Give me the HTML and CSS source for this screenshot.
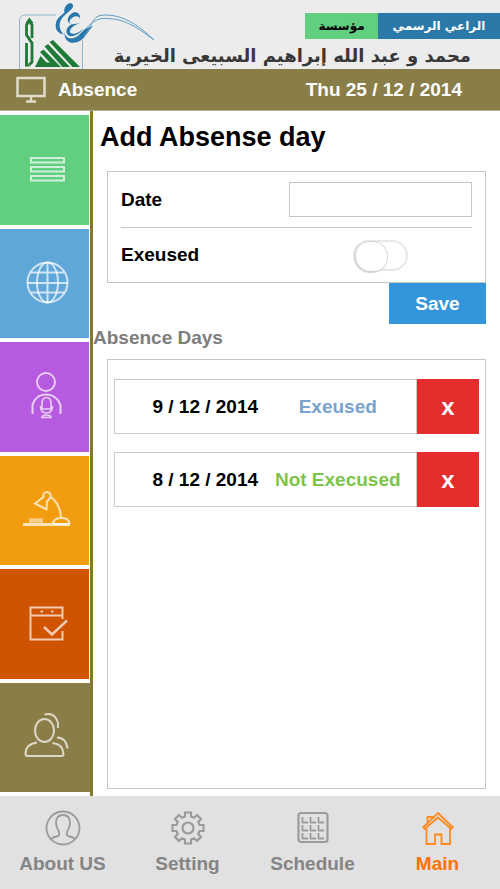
FILE: index.html
```html
<!DOCTYPE html>
<html lang="en">
<head>
<meta charset="utf-8">
<meta name="viewport" content="width=device-width, initial-scale=1">
<title>Absence</title>
<link rel="stylesheet" href="styles.css">
</head>
<body>
<div class="app">
  <header class="brand">
    <svg class="brand-logo" viewBox="0 0 156 69" aria-hidden="true">
      <path d="M19.500 69V21q0-6 6-6H56M82.500 69V40" fill="none" stroke="#8fb6d0"/>
      <g fill="none" stroke="#1f7a38" stroke-width="2.800">
        <path d="M32 38V25l-2.700-4.500L26.500 25v10l5.500 8v19l-3 3M26.500 43v23"/>
      </g>
      <g fill="#1f7a38">
        <path d="M25 66.500V60l5 6.500zM25.500 23l3.800-5.500L33.500 23z"/>
        <path d="M35 67l5.500-11 6 6.500H54l4.500 4.500z"/>
        <path d="M40 52l3.500-2.500L61 67h-7zM44.500 46.500l3.500-2.500 22 23h-7.500zM49.500 42l3.500-2 27 27h-7.500z"/>
      </g>
      <g fill="#2878ab">
        <path d="M69 3.500c3-.8 5 1.500 3.700 4C71 11 63 15 60.500 21c-2 5-.5 9 3 13.500-6-1-9-6-7.500-12 1.500-5 5-7 8.500-10-1-3 1-8 4.500-9z"/>
        <path d="M80 19c0-3-5-4-8-1-4 3-3 7 3 6l5-1c-5 2-9 4-10 8-.5 3 4 4 9 1l4-3c-4 6-12 9-15 6-4-4 0-9 4-11-6-1-5-7-1-10 4-4 10-1 9 5z"/>
        <path d="M64.500 32c1 7 8 8.500 14.500 3 4-4 7-7.500 14-9-4 4-6 9-11 13.500-8 6-18 4-17.500-7.500z"/>
      </g>
      <g fill="none" stroke="#5f9dc4">
        <path d="M84 36C91 30 91 18 100 15.500c20-3 38 9 54 24.500"/>
        <path d="M83 31c6-5 10-11 19-12.500 20-1 33 7 52 21.500"/>
      </g>
    </svg>
    <div class="brand-text" lang="ar" dir="rtl">
      <div class="brand-tags">
        <span class="tag tag-sponsor">الراعي الرسمي</span>
        <span class="tag tag-org">مؤسسة</span>
      </div>
      <p class="brand-name">محمد و عبد الله إبراهيم السبيعى الخيرية</p>
    </div>
  </header>

  <div class="titlebar">
    <svg class="title-icon" viewBox="0 0 30 28" aria-hidden="true"><path d="M1.500 2h27v18h-27zM15 20v5M10 25.500h10" fill="none" stroke="#dfdcc9" stroke-width="2.500"/></svg>
    <span class="title">Absence</span>
    <time class="today" datetime="2014-12-25">Thu 25 / 12 / 2014</time>
  </div>

  <div class="body">
    <nav class="side" aria-label="Sections">
      <a href="#" class="tile tile-green" aria-label="List"><svg viewBox="0 0 48 48"><path d="M8 12h33v4.500H8zM8 21h33v4.500H8zM8 30h33v4.500H8z"/></svg></a>
      <a href="#" class="tile tile-blue" aria-label="World"><svg viewBox="0 0 48 48"><circle cx="24.500" cy="23.500" r="20"/><ellipse cx="24.500" cy="23.500" rx="10.500" ry="20"/><path d="M24.500 3.500v40M4.500 24h40M8 13.500h33M8 33.500h33"/></svg></a>
      <a href="#" class="tile tile-purple" aria-label="Speaker"><svg viewBox="0 0 48 48"><circle cx="23" cy="9" r="9"/><path d="M9.500 41V32q3-10.500 13.500-10.500T37.500 32v9"/><path d="M19 36v-5.500q0-6 4.500-6t4.500 6V36M17.500 33q0 7 6 7t6-7M17.500 36h12M19 44.500q0-2.500 4.500-2.500t4.500 2.500z" stroke-width="1.600"/></svg></a>
      <a href="#" class="tile tile-orange" aria-label="Study"><svg viewBox="0 0 48 48"><path d="M12 17.500l8.500-6.500q-1-4.500 3.500-5 4.500.5 3.500 5.500l-3.500 4-.5 8zM28 11q9 7 10 20.500M30 37q1-5 8.500-5 7 0 8 5-8 3-16.500 0z"/><path d="M0 38.500h47" stroke-width="2.800"/><path d="M6 34.500h14" stroke-width="4.500" opacity=".7"/></svg></a>
      <a href="#" class="tile tile-rust" aria-label="Tasks"><svg viewBox="0 0 48 48"><path d="M39.500 19V7.500H7.500v32h32V31M7.500 15.500h32"/><path d="M17.500 11.500h2.500M28 11.500h2.500" stroke-width="2"/><path d="M21 27l8 7.500 15-14" stroke-width="2.400"/></svg></a>
      <a href="#" class="tile tile-olive" aria-label="People"><svg viewBox="0 0 48 48"><ellipse cx="21.500" cy="17.500" rx="9.500" ry="11.500"/><path d="M14 29.500Q2.500 31 2.500 41q0 2 2 2h34q2 0 2-2Q40 31 29.500 30M21.500 1.500Q32-1 35 10v5M34 24.500q9 0 10.500 11"/></svg></a>
    </nav>

    <main class="content">
      <h1 class="heading">Add Absense day</h1>
      <form class="entry">
        <div class="fields">
          <div class="field">
            <label for="date">Date</label>
            <div class="control"><input class="date-input" id="date" type="text"></div>
          </div>
          <div class="field">
            <label for="excused">Exeused</label>
            <div class="control"><input class="switch" id="excused" type="checkbox" role="switch"></div>
          </div>
        </div>
        <button class="save" type="submit">Save</button>
      </form>

      <h2 class="subheading">Absence Days</h2>
      <ul class="days">
        <li class="day">
          <div class="day-info"><span>9 / 12 / 2014</span><span class="excused">Exeused</span></div>
          <button class="remove" type="button">x</button>
        </li>
        <li class="day">
          <div class="day-info"><span>8 / 12 / 2014</span><span class="unexcused">Not Execused</span></div>
          <button class="remove" type="button">x</button>
        </li>
      </ul>
    </main>
  </div>

  <nav class="tabs" aria-label="Main">
    <a href="#" class="tab">
      <svg viewBox="0 0 36 36"><circle cx="18" cy="18" r="16.500"/><path d="M6 29q2-2 7-3 2-1 1-4-3-5-3-9 0-8 7-8t7 8q0 4-3 9-1 3 1 4 5 1 7 3"/></svg>
      About US
    </a>
    <a href="#" class="tab">
      <svg viewBox="0 0 36 36"><g stroke-width="2.200"><path d="M15 2.500h6v4l3 1.300 3-2.800 4 4-2.800 3 1.300 3h4v6h-4l-1.300 3 2.800 3-4 4-3-2.800-3 1.300v4h-6v-4l-3-1.300L9 31l-4-4 2.800-3-1.300-3h-4v-6h4l1.300-3L5 9l4-4 3 2.800 3-1.300z"/><circle cx="18" cy="18" r="5.500"/></g></svg>
      Setting
    </a>
    <a href="#" class="tab">
      <svg viewBox="0 0 36 36"><rect x="3.500" y="3" width="29" height="29" rx="2.500" stroke-width="2.200"/><path d="M7.500 7v5.500H13M15.500 7v5.500H21M23.500 7v5.500H29M7.500 15v5.500H13M15.500 15v5.500H21M23.500 15v5.500H29M7.500 23v5.500H13M15.500 23v5.500H21M23.500 23v5.500H29"/></svg>
      Schedule
    </a>
    <a href="#" class="tab tab-active" aria-current="page">
      <svg viewBox="0 0 36 36"><path d="M2.500 18L18 3l15.500 15M4 19.500L18 7.500l14 12M6.500 18.500V34H15V24.500h6.500V34H30V18.500M7.500 12.500V7H12v2"/></svg>
      Main
    </a>
  </nav>
</div>
</body>
</html>
```
FILE: styles.css
```css
* {
  box-sizing: border-box;
}

body {
  margin: 0;
  background: #fff;
  color: #000;
  font: bold 19px/24px "Liberation Sans", Arial, sans-serif;
}

button,
input {
  font: inherit;
}

a {
  color: inherit;
  text-decoration: none;
}

.app {
  display: flex;
  flex-direction: column;
  min-height: 100vh;
}

.brand {
  display: grid;
  background: #ececec;
}

.brand > * {
  grid-area: 1 / 1;
}

.brand-logo {
  width: 156px;
  height: 69px;
}

.brand-text {
  padding-top: 13px;
  font-family: "DejaVu Sans", sans-serif;
}

.brand-tags {
  display: flex;
  font-size: 12px;
  line-height: 26px;
  text-align: center;
}

.tag-sponsor {
  width: 122px;
  background: #2a79a9;
  color: #fff;
}

.tag-org {
  width: 73px;
  background: #62cf80;
}

.brand-name {
  margin: 0;
  padding: 4px 29px 0 0;
  color: #383838;
  font-size: 18px;
  line-height: 26px;
  white-space: nowrap;
}

.titlebar {
  display: flex;
  align-items: center;
  height: 42px;
  padding: 0 38px 0 16px;
  border-bottom: 1px solid #b7af8e;
  background: #8a7e48;
  color: #fff;
}

.title-icon {
  width: 30px;
  height: 28px;
  margin-right: 12px;
}

.today {
  margin-left: auto;
}

.body {
  display: flex;
  flex: 1;
}

.side {
  display: flex;
  flex-direction: column;
  gap: 4px;
  width: 93px;
  padding: 4px 0;
  border-right: 3px solid #85782a;
}

.tile {
  display: grid;
  flex: 1;
  place-items: center;
  min-height: 64px;
  margin-right: 1px;
}

.tile svg {
  width: 48px;
  height: 48px;
  margin-left: 4px;
  overflow: visible;
  fill: none;
  stroke: rgba(255, 255, 255, 0.7);
  stroke-width: 2;
}

.tile-green { background: #62cf80; }
.tile-blue { background: #5fa6d9; }
.tile-purple { background: #b65be0; }
.tile-orange { background: #f29d10; }
.tile-rust { background: #d05300; }
.tile-olive { margin-right: 0; background: #8a7e48; }

.content {
  display: flex;
  flex: 1;
  flex-direction: column;
  padding: 8px 14px 7px;
}

.heading {
  margin: 0 -7px 16px;
  font-size: 27px;
  line-height: 36px;
}

.entry {
  display: flex;
  flex-direction: column;
}

.fields {
  padding: 0 13px;
  border: 1px solid #c6c6c6;
}

.field {
  display: flex;
  align-items: center;
  height: 55px;
}

.field + .field {
  border-top: 1px solid #c6c6c6;
}

.field label {
  flex: 1;
}

.control {
  display: flex;
  justify-content: center;
  width: 52%;
}

.date-input {
  width: 100%;
  height: 35px;
  padding: 0 8px;
  border: 1px solid #c6c6c6;
  border-radius: 0;
  background: #fff;
}

.switch {
  width: 55px;
  height: 31px;
  margin: 0;
  border: 2px solid #e8e8e8;
  border-radius: 16px;
  appearance: none;
  background: #fff;
}

.switch::before {
  display: block;
  width: 32px;
  height: 30px;
  margin: -1px;
  border: 1px solid #d4d4d4;
  border-radius: 15px;
  background: #fff;
  box-shadow: inset 1px -1px 1px #ccc;
  content: "";
}

.switch:checked {
  background: #62cf80;
}

.switch:checked::before {
  margin-left: 21px;
}

.save {
  align-self: flex-end;
  width: 97px;
  height: 41px;
  padding: 0;
  border: 0;
  background: #3396da;
  color: #fff;
}

.subheading {
  margin: 2px -14px 9px;
  color: #7d7d7d;
  font-size: 19px;
  line-height: 24px;
}

.days {
  display: flex;
  flex: 1;
  flex-direction: column;
  gap: 18px;
  margin: 0;
  padding: 19px 6px;
  border: 1px solid #c6c6c6;
  list-style: none;
}

.day {
  display: flex;
  height: 55px;
}

.day-info {
  display: grid;
  flex: 1;
  grid-template-columns: 1fr 1fr;
  align-items: center;
  padding: 0 12px 0 24px;
  border: 1px solid #cbcbcb;
  text-align: center;
  white-space: nowrap;
}

.excused { color: #78a3cd; }
.unexcused { color: #7cc548; }

.remove {
  width: 62px;
  padding: 0;
  border: 0;
  background: #e52d2d;
  color: #fff;
  font-size: 24px;
}

.tabs {
  display: grid;
  grid-template-columns: repeat(4, 1fr);
  background: #e1e1e1;
}

.tab {
  display: flex;
  flex-direction: column;
  align-items: center;
  gap: 6px;
  padding: 14px 0 13px;
  color: #858585;
}

.tab svg {
  width: 36px;
  height: 36px;
  fill: none;
  stroke: #9b9b9b;
  stroke-width: 1.8;
}

.tab-active {
  color: #ff7200;
}

.tab-active svg {
  stroke: #ff8a22;
}
```
